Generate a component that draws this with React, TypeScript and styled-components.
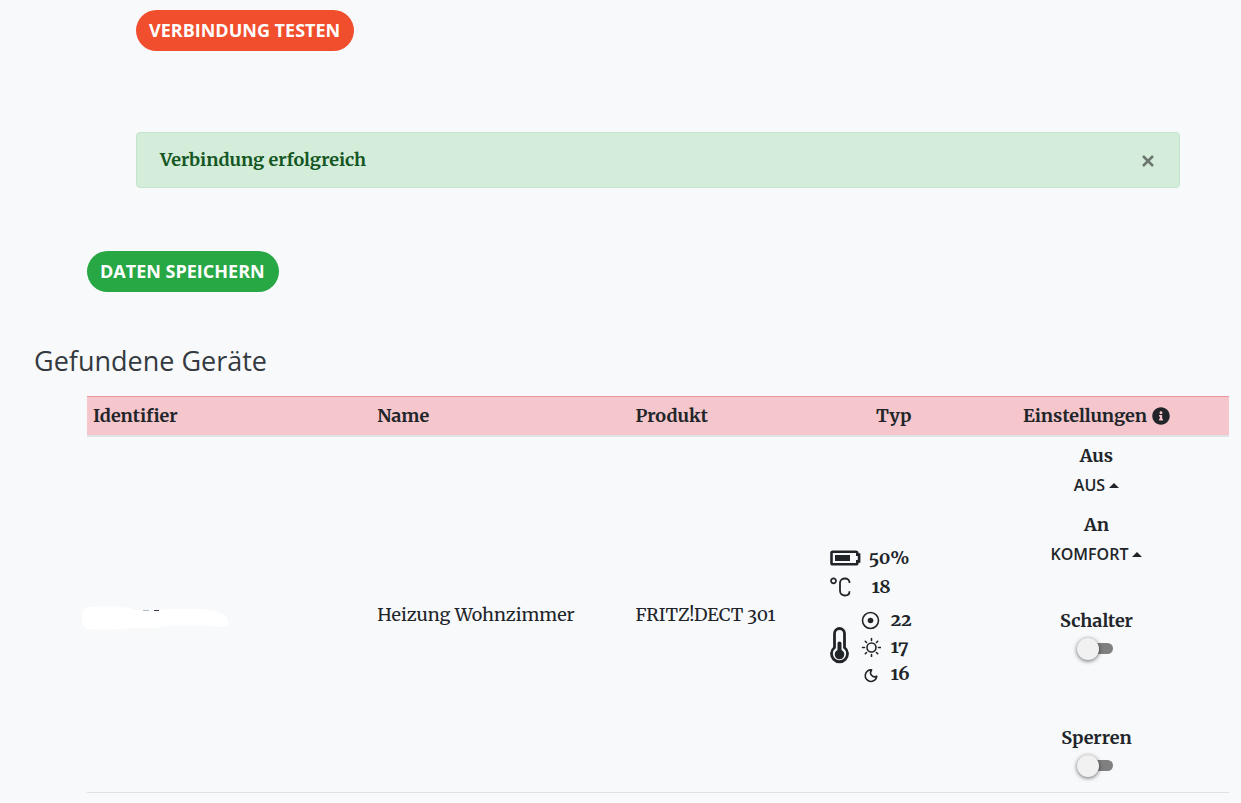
import React from "react";
import styled, { createGlobalStyle } from "styled-components";
import { FaInfoCircle } from "react-icons/fa";

const serif = `"Merriweather", "DejaVu Serif Condensed", "DejaVu Serif", serif`;
const sans = `"Open Sans", "Noto Sans", sans-serif`;

const GlobalStyle = createGlobalStyle`
  *, *::before, *::after { box-sizing: border-box; }
  body {
    margin: 0;
    background: #f8f9fb;
    color: #212529;
    font-family: ${serif};
    font-size: 18px;
    font-variant-numeric: oldstyle-nums;
    line-height: 26px;
  }
`;

const Page = styled.main`
  padding: 10px 12px 10px 34px;
`;

const ConnectionSection = styled.section`
  padding: 0 49px 0 102px;
`;

const DeviceSection = styled.div`
  padding-left: 53px;
`;

const PillButton = styled.button<{ $color: string }>`
  display: block;
  height: 41px;
  padding: 0 14px 2px 13px;
  border: 0;
  border-radius: 21px;
  background: ${(p) => p.$color};
  color: #fff;
  font-family: ${sans};
  font-size: 18px;
  font-weight: 700;
  line-height: 26px;
  text-transform: uppercase;
  cursor: pointer;
`;

const Alert = styled.div`
  display: flex;
  align-items: center;
  justify-content: space-between;
  height: 56px;
  margin: 81px 0 63px;
  padding: 0 23px;
  border: 1px solid #c3e6cb;
  border-radius: 4px;
  background: #d4edda;
  color: #155724;
  font-weight: 700;
`;

const CloseButton = styled.button`
  display: flex;
  padding: 2px 1px 0;
  border: 0;
  background: none;
  color: #6b776e;
  cursor: pointer;
`;

const Heading = styled.h2`
  margin: 51px 0 17px;
  color: #343a40;
  font-family: ${sans};
  font-size: 27px;
  font-weight: 400;
  line-height: 36px;
`;

const DeviceTable = styled.table`
  width: 100%;
  border-collapse: separate;
  border-spacing: 0;
  table-layout: fixed;
`;

const HeadCell = styled.th<{ $width: string; $center?: boolean }>`
  width: ${(p) => p.$width};
  height: 41px;
  padding: 0 6px;
  border-top: 1px solid #ed969e;
  border-bottom: 2px solid #dee2e6;
  background: #f5c6cb;
  font-weight: 700;
  text-align: ${(p) => (p.$center ? "center" : "left")};
  white-space: nowrap;
`;

const HeadLabel = styled.span`
  display: inline-flex;
  align-items: center;
  gap: 5px;
`;

const Cell = styled.td`
  padding: 6px;
  border-bottom: 1px solid #dee2e6;
  vertical-align: middle;
`;

const Redaction = styled.svg`
  display: block;
  margin: 8px 0 0 -12px;
`;

const Readings = styled.div`
  display: flex;
  flex-direction: column;
  gap: 3px;
  padding-top: 3px;
  font-weight: 700;
`;

const Reading = styled.div`
  display: flex;
  align-items: center;
  gap: 8px;
`;

const IconSlot = styled.span<{ $width: number }>`
  display: flex;
  flex: none;
  justify-content: flex-start;
  width: ${(p) => p.$width}px;
`;

const Targets = styled.div`
  display: flex;
  align-items: center;
  gap: 12px;
  padding-top: 4px;
`;

const TargetList = styled.ul`
  margin: 0;
  padding: 0;
  list-style: none;
`;

const Target = styled.li`
  display: flex;
  align-items: center;
  gap: 10px;
  height: 27px;
`;

const Settings = styled.div`
  display: flex;
  flex-direction: column;
  align-items: center;
  font-weight: 700;
`;

const Setting = styled.div<{ $height: number }>`
  display: flex;
  flex-direction: column;
  align-items: center;
  height: ${(p) => p.$height}px;
`;

const MenuButton = styled.button`
  display: flex;
  align-items: center;
  gap: 4px;
  height: 32px;
  padding: 0;
  border: 0;
  background: none;
  color: #212529;
  font-family: ${sans};
  font-size: 16px;
  font-weight: 600;
  text-transform: uppercase;
  cursor: pointer;
`;

const Switch = styled.input`
  appearance: none;
  display: flex;
  align-items: center;
  width: 34px;
  height: 11px;
  margin: 9px 0 0;
  border-radius: 6px;
  background: #808080;
  cursor: pointer;

  &::before {
    content: "";
    flex: none;
    width: 22px;
    height: 22px;
    margin-left: -2px;
    border-radius: 50%;
    background: #f1f1f1;
    box-shadow: 0 1px 4px rgba(0, 0, 0, 0.6);
  }

  &:checked {
    justify-content: flex-end;
  }
`;

const BatteryIcon = () => (
  <svg width="31" height="16" viewBox="0 0 31 16" aria-label="Batterie" role="img">
    <path d="M2.800 1.700h23.200q1.300 0 1.300 1.300v1.600h1.800v6.800h-1.800V13q0 1.300-1.300 1.300H2.800q-1.300 0-1.300-1.300V3q0-1.300 1.300-1.300z" fill="none" stroke="#212529" strokeWidth="2.600" />
    <path d="M5 5h15v6H5z" fill="#212529" />
  </svg>
);

const CelsiusIcon = () => (
  <svg width="22" height="20" viewBox="0 0 22 20" fill="none" stroke="#212529" aria-label="Grad Celsius" role="img">
    <circle cx="3.500" cy="3.800" r="2.500" strokeWidth="1.700" />
    <path d="M19.500 6V5.500C19.500 3 17.700 1.500 15 1.500S10 3.200 10 5.800v8C10 16.700 12.200 18.500 15 18.500s4.500-1.600 4.500-4.300" strokeWidth="1.800" />
  </svg>
);

const ThermometerIcon = () => (
  <svg width="19" height="41" viewBox="0 0 19 41" aria-label="Solltemperatur" role="img">
    <path d="M4.500 20.500V6.500a5 5 0 0 1 10 0v14a8 8 0 1 1-10 0z" fill="none" stroke="#212529" strokeWidth="2.800" />
    <circle cx="9.500" cy="27.500" r="4.800" fill="#212529" />
    <path d="M9.500 16.500v11" stroke="#212529" strokeWidth="4" strokeLinecap="round" />
  </svg>
);

const TargetIcon = () => (
  <svg width="20" height="20" viewBox="0 0 20 20" aria-label="Soll" role="img">
    <circle cx="9.500" cy="10.500" r="8" fill="none" stroke="#212529" strokeWidth="1.600" />
    <circle cx="9.500" cy="10.500" r="2.800" fill="#212529" />
  </svg>
);

const SunIcon = () => (
  <svg width="20" height="20" viewBox="0 0 20 20" fill="none" stroke="#212529" strokeWidth="1.600" strokeLinecap="round" aria-label="Komfort" role="img">
    <circle cx="10.500" cy="10.500" r="4.500" />
    <path d="M10.500 1.500v2M10.500 17.500v2M1.500 10.500h2M17.500 10.500h2M4.300 4.300l1.200 1.200M15.500 15.500l1.200 1.200M4.300 16.700l1.200-1.200M15.500 5.500l1.200-1.200" />
  </svg>
);

const MoonIcon = () => (
  <svg width="20" height="20" viewBox="0 0 20 20" aria-label="Absenkung" role="img">
    <path d="M10.600 5.900A5.800 5.800 0 1 0 15.800 12.300A4.200 4.200 0 0 1 10.600 5.900z" fill="none" stroke="#212529" strokeWidth="1.600" strokeLinejoin="round" />
  </svg>
);

const Caret = () => (
  <svg width="10" height="5" viewBox="0 0 10 5" aria-hidden="true">
    <path d="M0 5L5 0L10 5z" fill="#212529" />
  </svg>
);

const targets = [
  { icon: <TargetIcon />, value: 22 },
  { icon: <SunIcon />, value: 17 },
  { icon: <MoonIcon />, value: 16 },
];

export default function App() {
  return (
    <>
      <GlobalStyle />
      <Page>
        <ConnectionSection>
          <PillButton type="button" $color="#f04e2d">Verbindung testen</PillButton>
          <Alert role="alert">
            <span>Verbindung erfolgreich</span>
            <CloseButton type="button" aria-label="Schließen">
              <svg width="14" height="14" viewBox="0 0 14 14" aria-hidden="true">
                <path d="M2 2l10 10M12 2L2 12" stroke="currentColor" strokeWidth="2.500" />
              </svg>
            </CloseButton>
          </Alert>
        </ConnectionSection>
        <DeviceSection>
          <PillButton type="button" $color="#28a745">Daten speichern</PillButton>
        </DeviceSection>
        <Heading>Gefundene Geräte</Heading>
        <DeviceSection>
          <DeviceTable>
            <thead>
              <tr>
                <HeadCell $width="24.9%">Identifier</HeadCell>
                <HeadCell $width="22.6%">Name</HeadCell>
                <HeadCell $width="17%">Produkt</HeadCell>
                <HeadCell $width="12.3%" $center>Typ</HeadCell>
                <HeadCell $width="23.2%" $center>
                  <HeadLabel>Einstellungen <FaInfoCircle size={18} /></HeadLabel>
                </HeadCell>
              </tr>
            </thead>
            <tbody>
              <tr>
                <Cell>
                  <Redaction width="150" height="26" viewBox="0 0 150 26" aria-hidden="true">
                    <path d="M8 1Q30-1 48 2Q60 6 80 4Q96 2 120 3Q143 4 147 14Q148 21 142 21Q116 18 84 20Q76 23 50 22Q26 25 8 23Q0 21 1 13Q0 3 8 1z" fill="#fff" />
                    <path d="M62 4.500h6" stroke="#a9bccb" />
                    <path d="M73 4.500h5" stroke="#3a3f48" />
                  </Redaction>
                </Cell>
                <Cell>Heizung Wohnzimmer</Cell>
                <Cell>FRITZ!DECT 301</Cell>
                <Cell>
                  <Readings>
                    <Reading><IconSlot $width={31}><BatteryIcon /></IconSlot>50%</Reading>
                    <Reading><IconSlot $width={34}><CelsiusIcon /></IconSlot>18</Reading>
                    <Targets>
                      <ThermometerIcon />
                      <TargetList>
                        {targets.map((t) => (
                          <Target key={t.value}>{t.icon}{t.value}</Target>
                        ))}
                      </TargetList>
                    </Targets>
                  </Readings>
                </Cell>
                <Cell>
                  <Settings>
                    <Setting $height={69}>
                      <span>Aus</span>
                      <MenuButton type="button">Aus <Caret /></MenuButton>
                    </Setting>
                    <Setting $height={96}>
                      <span>An</span>
                      <MenuButton type="button">Komfort <Caret /></MenuButton>
                    </Setting>
                    <Setting $height={117}>
                      <label htmlFor="schalter">Schalter</label>
                      <Switch id="schalter" type="checkbox" />
                    </Setting>
                    <Setting $height={61}>
                      <label htmlFor="sperren">Sperren</label>
                      <Switch id="sperren" type="checkbox" />
                    </Setting>
                  </Settings>
                </Cell>
              </tr>
            </tbody>
          </DeviceTable>
        </DeviceSection>
      </Page>
    </>
  );
}
